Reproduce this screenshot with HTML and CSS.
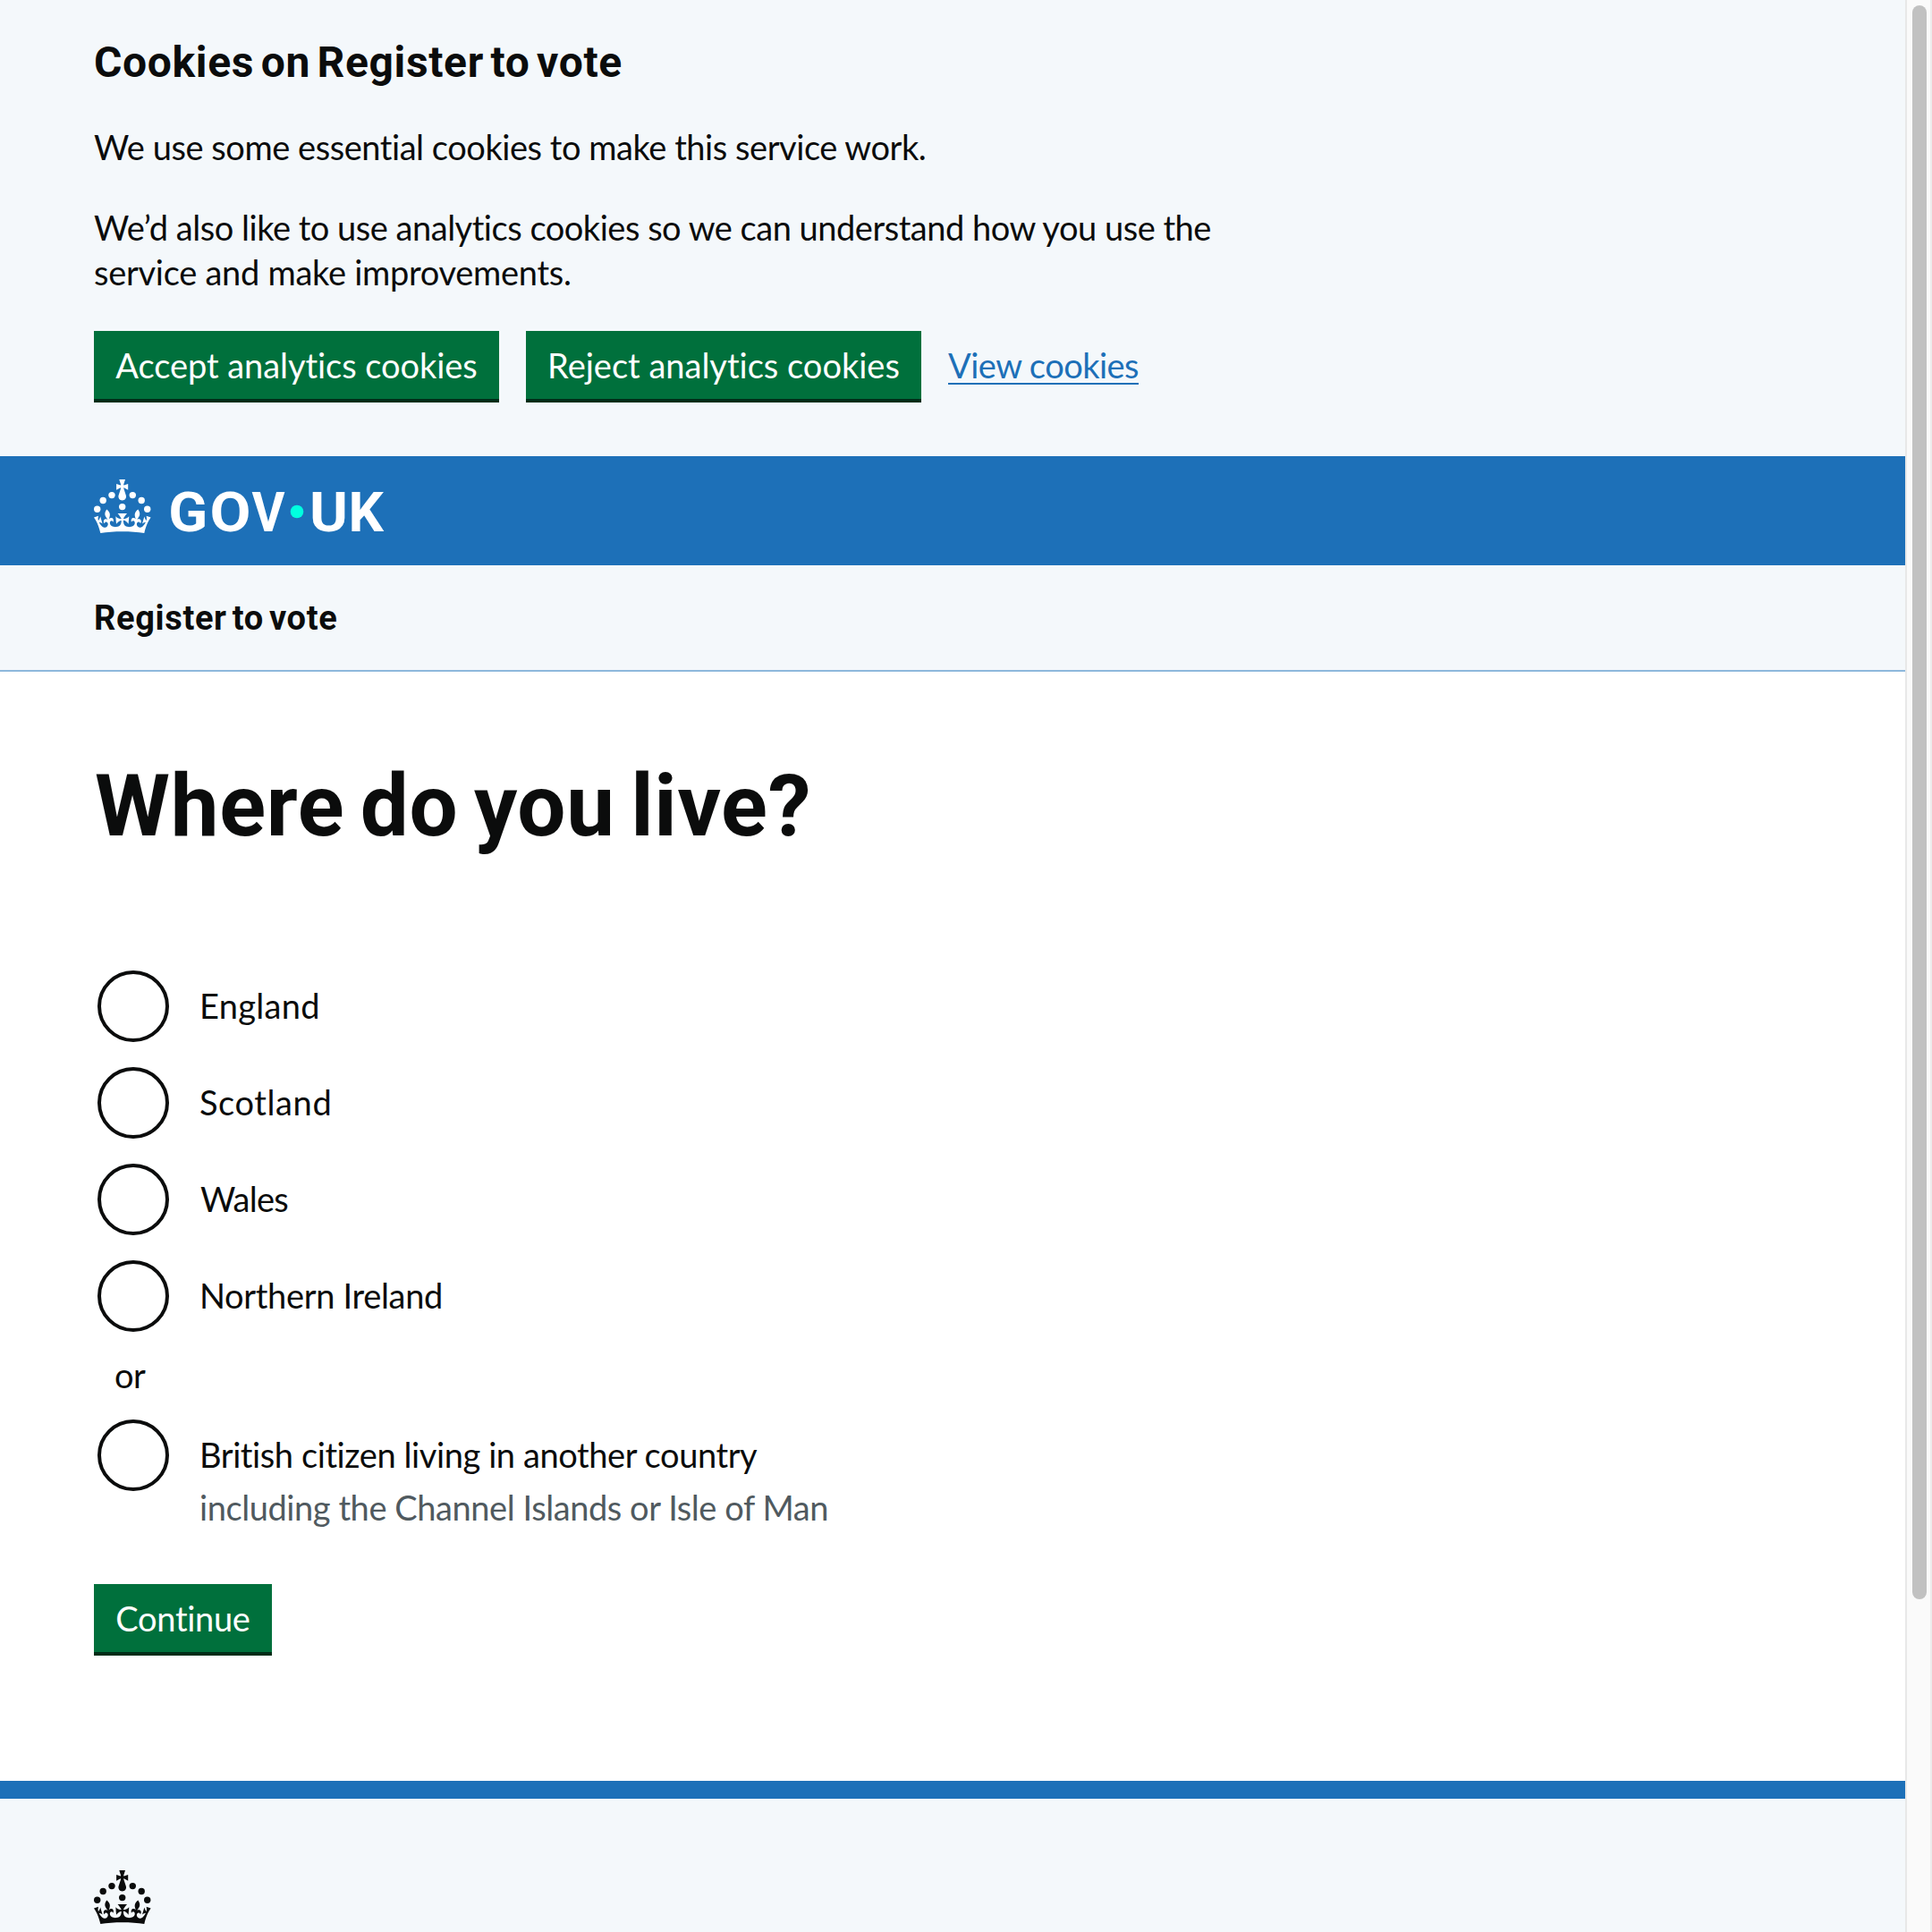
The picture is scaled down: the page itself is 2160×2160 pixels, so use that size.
FILE: index.html
```html
<!DOCTYPE html>
<html lang="en">
<head>
<meta charset="utf-8">
<title>Where do you live? - Register to vote</title>
<link rel="stylesheet" href="styles.css">
</head>
<body>
<svg class="sprite" aria-hidden="true">
  <symbol id="crown" viewBox="0 0 64 60">
    <circle cx="20" cy="17.6" r="3.7"/>
    <circle cx="10.2" cy="23.5" r="3.7"/>
    <circle cx="3.7" cy="33.2" r="3.7"/>
    <circle cx="31.7" cy="30.6" r="3.7"/>
    <circle cx="43.3" cy="17.6" r="3.7"/>
    <circle cx="53.2" cy="23.5" r="3.7"/>
    <circle cx="59.7" cy="33.2" r="3.7"/>
    <path d="M33.1,9.8c.2-.1.3-.3.5-.5l4.6,2.4v-6.8l-4.6,1.5c-.1-.2-.3-.3-.5-.5l1.9-5.9h-6.7l1.9,5.9c-.2.1-.3.3-.5.5l-4.6-1.5v6.8l4.6-2.4c.1.2.3.3.5.5l-2.6,8c-.9,2.8,1.2,5.7,4.1,5.7h0c3,0,5.1-2.9,4.1-5.7l-2.6-8ZM37,37.9s-3.4,3.8-4.1,6.1c2.2,0,4.2-.5,6.4-2.8l-.7,8.5c-2-2.8-4.4-4.1-5.7-3.8.1,3.1.5,6.7,5.8,7.2,3.7.3,6.7-1.5,7-3.8.4-2.6-2-4.3-3.7-1.6-1.4-4.5,2.4-6.1,4.9-3.2-1.9-4.5-1.8-7.7,2.4-10.9,3,4,2.6,7.3-1.2,11.1,2.4-1.3,6.2,0,4,4.6-1.2-2.8-3.7-2.2-4.2.2-.3,1.7.7,3.7,3,4.2,1.9.3,4.7-.9,7-5.9-1.3,0-2.4.7-3.9,1.7l2.4-8c.6,2.3,1.4,3.7,2.2,4.5.6-1.6.5-2.8,0-5.3l5,1.8c-2.6,3.6-5.2,8.7-7.3,17.5-7.4-1.1-15.7-1.7-24.5-1.7h0c-8.8,0-17.1.6-24.5,1.7-2.1-8.9-4.7-13.9-7.3-17.5l5-1.8c-.5,2.5-.6,3.7,0,5.3.8-.8,1.6-2.3,2.2-4.5l2.4,8c-1.5-1-2.6-1.7-3.9-1.7,2.3,5,5.2,6.2,7,5.9,2.3-.4,3.3-2.4,3-4.2-.5-2.4-3-3.1-4.2-.2-2.2-4.6,1.6-6,4-4.6-3.7-3.7-4.2-7.1-1.2-11.1,4.2,3.2,4.3,6.4,2.4,10.9,2.5-2.8,6.3-1.3,4.9,3.2-1.8-2.7-4.1-1-3.7,1.6.3,2.3,3.3,4.1,7,3.8,5.4-.5,5.7-4.2,5.8-7.2-1.3-.2-3.7,1-5.7,3.8l-.7-8.5c2.2,2.3,4.2,2.7,6.4,2.8-.7-2.3-4.1-6.1-4.1-6.1h10.6,0Z"/>
  </symbol>
</svg>
<div class="window">
  <div class="page">
    <section class="cookies">
      <h2 class="cookies-title">Cookies on Register to vote</h2>
      <p class="copy copy-intro">We use some essential cookies to make this service work.</p>
      <p class="copy"><span class="copy-wide">We’d also like to use analytics cookies so we can understand how you use the</span><br><span class="copy-end">service and make improvements.</span></p>
      <div class="actions">
        <button class="button button-accept">Accept analytics cookies</button>
        <button class="button button-reject">Reject analytics cookies</button>
        <a class="link" href="#">View cookies</a>
      </div>
    </section>
    <header class="header">
      <svg class="logo" viewBox="0 0 324 60" role="img" aria-label="GOV.UK">
        <use href="#crown" width="64" height="60"/>
        <g class="logo-text">
          <text x="83.2" y="58" textLength="44" lengthAdjust="spacingAndGlyphs">G</text>
          <text x="129.5" y="58" textLength="46" lengthAdjust="spacingAndGlyphs">O</text>
          <text x="176.6" y="58" textLength="37" lengthAdjust="spacingAndGlyphs">V</text>
          <text x="241" y="58" textLength="43" lengthAdjust="spacingAndGlyphs">U</text>
          <text x="284.5" y="58" textLength="39.4" lengthAdjust="spacingAndGlyphs">K</text>
        </g>
        <circle class="logo-dot" cx="227" cy="36" r="7.3"/>
      </svg>
    </header>
    <nav class="service">Register to vote</nav>
    <main class="main">
      <h1 class="title">Where do you live?</h1>
      <form class="radios">
        <label class="radio"><input class="dot" type="radio" name="c"><span class="label label-england">England</span></label>
        <label class="radio"><input class="dot" type="radio" name="c"><span class="label label-scotland">Scotland</span></label>
        <label class="radio"><input class="dot" type="radio" name="c"><span class="label label-wales">Wales</span></label>
        <label class="radio"><input class="dot" type="radio" name="c"><span class="label label-ni">Northern Ireland</span></label>
        <div class="or">or</div>
        <label class="radio radio-last"><input class="dot" type="radio" name="c"><span class="label label-abroad">British citizen living in another country<span class="hint">including the Channel Islands or Isle of Man</span></span></label>
      </form>
      <button class="button button-continue">Continue</button>
    </main>
    <footer class="footer"><svg class="footer-crown" viewBox="0 0 64 60"><use href="#crown" width="64" height="60"/></svg></footer>
  </div>
  <div class="scrollbar"><div class="thumb"></div></div>
</div>
</body>
</html>
```
FILE: styles.css
```css
* { box-sizing: border-box; }
body {
  margin: 0;
  color: #0b0c0c;
  background: #fff;
  font: 400 38px/50px Lato, "Liberation Sans", sans-serif;
  font-variant-ligatures: none;
}
h1, h2, p { margin: 0; }
.sprite { display: none; }
.window { display: grid; grid-template-columns: 1fr 30px; height: 2160px; overflow: hidden; }
.page { height: 2160px; overflow: hidden; }

.cookies { background: #f4f8fb; padding: 40px 105px 60px; height: 510px; }
.cookies-title {
  font: 700 48px/60px Roboto, sans-serif;
  letter-spacing: 0.65px;
  word-spacing: -5px;
  margin-bottom: 39px;
}
.copy { white-space: nowrap; }
.copy-intro { margin-bottom: 40px; letter-spacing: -0.45px; }
.copy-wide { letter-spacing: -0.48px; }
.copy-end { letter-spacing: -0.28px; }
.actions { display: flex; gap: 30px; margin-top: 41px; }

.button {
  display: block;
  height: 76px;
  margin: 0;
  padding: 19px 0;
  border: 0;
  border-radius: 0;
  background: #00703c;
  box-shadow: 0 4px 0 #002d18;
  color: #fff;
  font: inherit;
  line-height: 38px;
  text-align: center;
  white-space: nowrap;
}
.button-accept { width: 453px; letter-spacing: -0.06px; }
.button-reject { width: 442px; }
.button-continue { width: 199px; letter-spacing: -0.3px; }
.link {
  align-self: flex-start;
  height: 41px;
  margin-top: 19px;
  border-bottom: 2px solid #1d70b8;
  color: #1d70b8;
  line-height: 38px;
  letter-spacing: -0.53px;
  text-decoration: none;
}

.header { height: 122px; padding: 26px 105px; background: #1d70b8; color: #fff; }
.logo { display: block; width: 324px; height: 60px; fill: currentColor; overflow: visible; }
.logo-text { font: 700 62px Roboto, sans-serif; }
.logo-dot { fill: #00ffe0; }

.service {
  height: 119px;
  padding: 34px 105px 0;
  background: #f4f8fb;
  border-bottom: 2px solid #8eb8dc;
  font: 700 38px/50px Roboto, sans-serif;
  letter-spacing: 0.65px;
  word-spacing: -4px;
}

.main { padding: 100px 105px 144px; }
.title {
  font: 700 96px/100px Roboto, sans-serif;
  letter-spacing: 0.7px;
  word-spacing: -7px;
  padding-left: 1px;
}
.radios { display: flex; flex-direction: column; padding: 134px 0 0 4px; }
.radio { display: flex; height: 80px; margin-bottom: 28px; }
.dot {
  appearance: none;
  flex: none;
  width: 80px;
  height: 80px;
  margin: 0 34px 0 0;
  border: 4px solid #0b0c0c;
  border-radius: 50%;
  background: #fff;
}
.label { padding-top: 13.5px; white-space: nowrap; }
.label-england { letter-spacing: 0.3px; }
.label-scotland { letter-spacing: 0.6px; }
.label-wales { letter-spacing: -0.7px; padding-left: 1px; }
.label-ni { letter-spacing: -0.33px; }
.label-abroad { letter-spacing: -0.41px; }
.hint { display: block; margin-top: 9px; color: #505a5f; letter-spacing: -0.43px; }
.or { margin: -5px 0 25px 19px; letter-spacing: -0.5px; }
.radio-last { height: 184px; margin: 0; }

.footer { border-top: 20px solid #1d70b8; background: #f4f8fb; padding: 80px 105px; }
.footer-crown { display: block; width: 64px; height: 60px; fill: #0b0c0c; }

.scrollbar {
  padding: 6px 4px 0 6px;
  background: #fafafa;
  border-left: 2px solid #e8e8e8;
  border-right: 2px solid #ededed;
}
.thumb { width: 16px; height: 1782px; border-radius: 8px; background: #c1c1c1; }
```
